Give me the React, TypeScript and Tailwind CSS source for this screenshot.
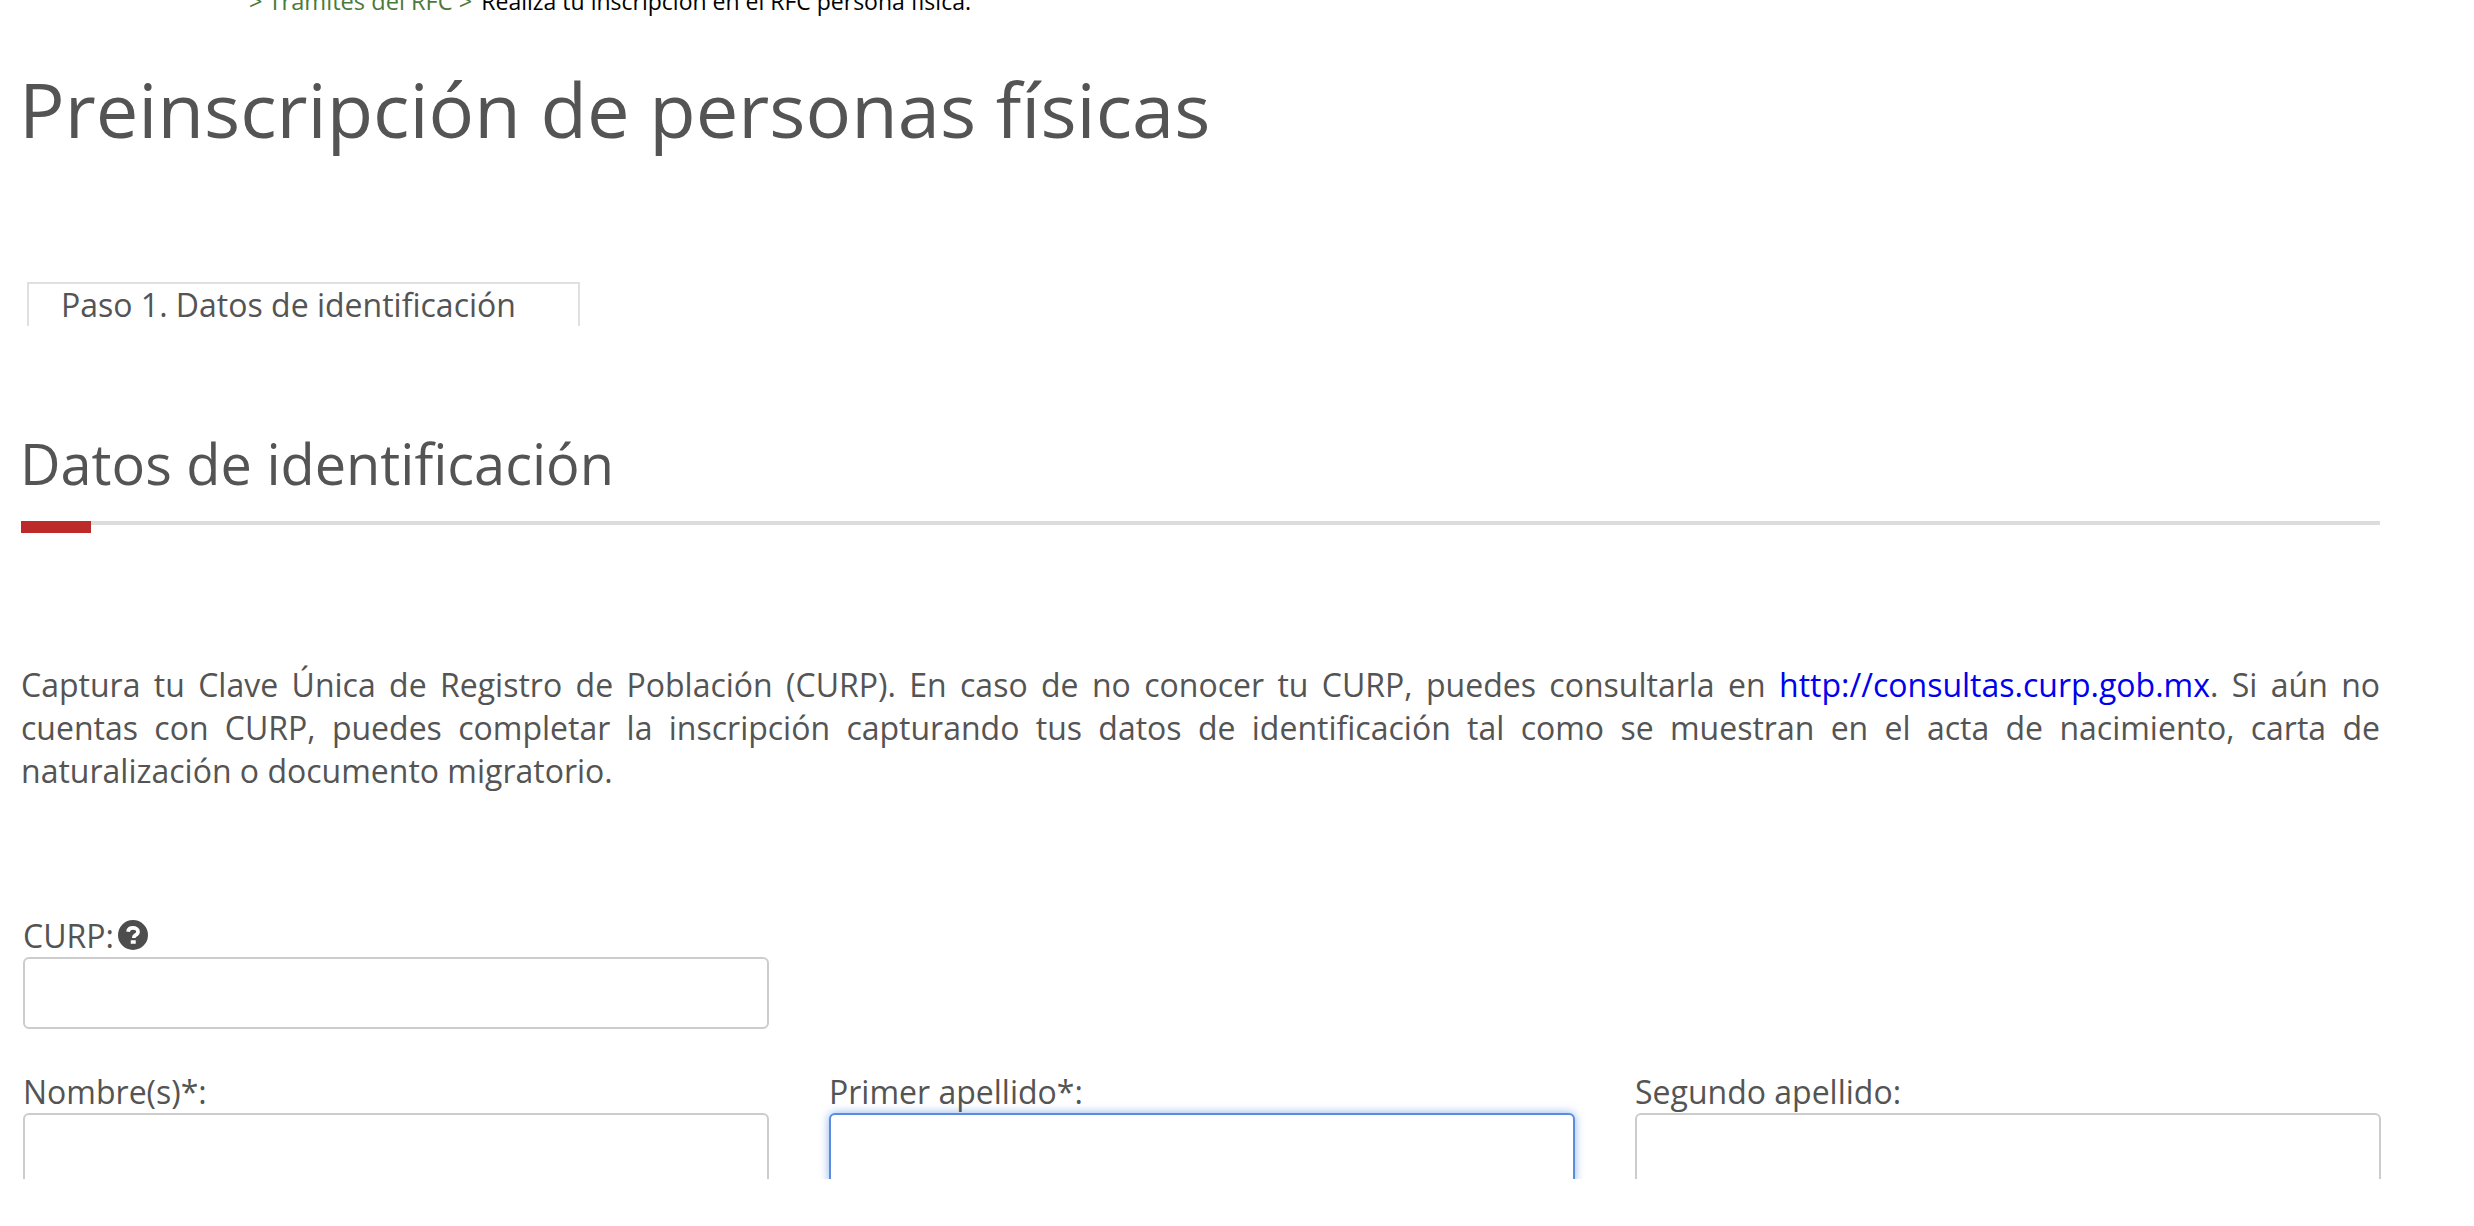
const font = { fontFamily: '"Open Sans", sans-serif' };

function Field({ label, active, help }: { label: string; active?: boolean; help?: boolean }) {
  return (
    <div className="min-w-0">
      <label className="flex items-center h-[37px] pt-[1px] text-[32px] leading-[36px] text-[#545454] mb-[3px]">
        {label}
        {help && (
          <svg className="ml-[4px] mb-[3px] w-[30px] h-[30px]" viewBox="0 0 24 24" aria-hidden="true">
            <circle cx="12" cy="12" r="12" fill="#4d4d4d" />
            <path d="M8 9.4c.3-2.100 1.900-3.100 4-3.100 2.300 0 4 1.200 4 3 0 1.600-1 2.200-2 2.800-.8.500-1.300.9-1.300 1.900v.4" fill="none" stroke="#fff" strokeWidth="3" />
            <rect x="10.200" y="16.200" width="4" height="2.800" fill="#fff" />
          </svg>
        )}
      </label>
      <div
        className={
          active
            ? "w-full h-[72px] rounded-[6px] border-2 border-[#5b8dde] shadow-[0_0_10px_rgba(102,155,233,0.75)] bg-white"
            : "w-full h-[72px] rounded-[6px] border-2 border-[#cccccc] bg-white"
        }
      />
    </div>
  );
}

export default function App() {
  return (
    <div className="h-[1226px] overflow-hidden bg-white" style={font}>
      <div className="h-[1179px] overflow-hidden">
        <div className="pl-[249px] -mt-[15px] leading-[32px] whitespace-nowrap h-[32px]">
          <span className="text-[#4a7a3a] text-[23.6px]">&gt; Trámites del RFC &gt; </span>
          <span className="ml-[3px] text-black text-[23px]">Realiza tu inscripción en el RFC persona física.</span>
        </div>
        <h1 className="mt-[42px] pl-[19px] text-[75.9px] leading-[100px] text-[#545454] whitespace-nowrap">
          Preinscripción de personas físicas
        </h1>
        <div className="mt-[123px] ml-[27px] w-[553px] h-[44px] border-x-2 border-t-2 border-[#e0e0e0] pl-[32px] pt-[2px] text-[32px] leading-[38px] text-[#545454]">
          Paso 1. Datos de identificación
        </div>
        <div className="mt-[102px] mx-[21px] w-[2359px]">
          <h2 className="-ml-[1px] text-[55.9px] leading-[70px] text-[#545454]">Datos de identificación</h2>
          <div className="mt-[23px] h-[4px] bg-[#dcdcdc]">
            <div className="w-[70px] h-[12px] bg-[#bc2a2a]" />
          </div>
          <p className="mt-[138px] text-[32px] leading-[43px] text-[#545454] text-justify">
            Captura tu Clave Única de Registro de Población (CURP). En caso de no conocer tu CURP, puedes consultarla en{" "}
            <a className="text-[#0000ee]">http://consultas.curp.gob.mx</a>. Si aún no cuentas con CURP, puedes completar la inscripción capturando tus datos de identificación tal como se muestran en el acta de nacimiento, carta de naturalización o documento migratorio.
          </p>
        </div>
        <div className="mt-[125px] ml-[23px] w-[2359px]">
          <div className="w-[746px]">
            <Field label="CURP:" help />
          </div>
          <div className="mt-[44px] grid grid-cols-[746px_746px_746px] gap-x-[60px]">
            <Field label="Nombre(s)*:" />
            <Field label="Primer apellido*:" active />
            <Field label="Segundo apellido:" />
          </div>
        </div>
      </div>
    </div>
  );
}
